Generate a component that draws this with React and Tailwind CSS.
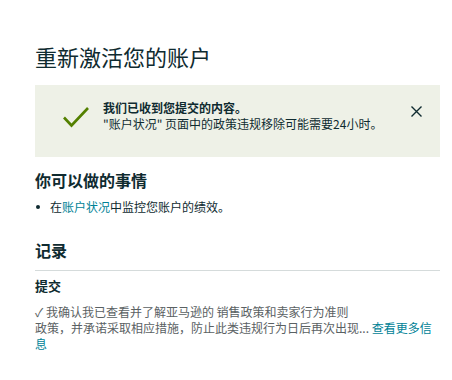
import React from 'react';

const font = { fontFamily: '"Noto Sans CJK SC", "Noto Sans", sans-serif' };

const CheckMark = () => (
    <svg width="28" height="22" viewBox="0 0 28 22" fill="none">
        <path d="M2 11.5 L9.5 19.5 L26 2" stroke="#538000" strokeWidth="2.6" />
    </svg>
);

const CloseIcon = () => (
    <svg width="11" height="11" viewBox="0 0 11 11" fill="none">
        <path d="M0.5 0.5 L10.5 10.5 M10.5 0.5 L0.5 10.5" stroke="#0f2b30" strokeWidth="1.4" />
    </svg>
);

const App = () => {
    return (
        <div className="w-[452px] h-[380px] bg-white pl-[35px] pr-[12px] pt-[41px] text-[#0f2b30]" style={font}>
            {/* Titel */}
            <h1 className="text-[22px] leading-[30px] font-normal">重新激活您的账户</h1>

            {/* Varsel */}
            <div className="mt-[14px] h-[72px] w-[405px] bg-[#eef1e7] flex items-start pl-[27px] pr-[18px] pt-[18px]">
                <div className="pt-[3px]">
                    <CheckMark />
                </div>
                <div className="ml-[13px] flex-1 text-[12px] leading-[16px] -mt-[3px]">
                    <div className="font-bold">我们已收到您提交的内容。</div>
                    <div>"账户状况" 页面中的政策违规移除可能需要24小时。</div>
                </div>
                <div className="pt-[3px]">
                    <CloseIcon />
                </div>
            </div>

            {/* Hva du kan gjøre */}
            <h2 className="mt-[11px] text-[16px] leading-[24px] font-bold">你可以做的事情</h2>
            <ul className="mt-[7px] text-[12px] leading-[16px]">
                <li className="flex items-center">
                    <span className="w-[4px] h-[4px] rounded-full bg-[#0f2b30] ml-[1px] mr-[10px]"></span>
                    <span>
                        在<span className="text-[#008296]">账户状况</span>中监控您账户的绩效。
                    </span>
                </li>
            </ul>

            {/* Historikk */}
            <h2 className="mt-[23px] text-[16px] leading-[24px] font-bold">记录</h2>
            <div className="mt-[8px] border-t border-[#d5dbdb]"></div>
            <div className="mt-[5px] text-[13px] leading-[20px] font-bold">提交</div>
            <div className="mt-[8px] text-[12px] leading-[16px] text-[#5a6163]">
                <div>✓ 我确认我已查看并了解亚马逊的 销售政策和卖家行为准则</div>
                <div>
                    政策，并承诺采取相应措施，防止此类违规行为日后再次出现... <span className="text-[#008296]">查看更多信息</span>
                </div>
            </div>
        </div>
    );
};

export default App;
